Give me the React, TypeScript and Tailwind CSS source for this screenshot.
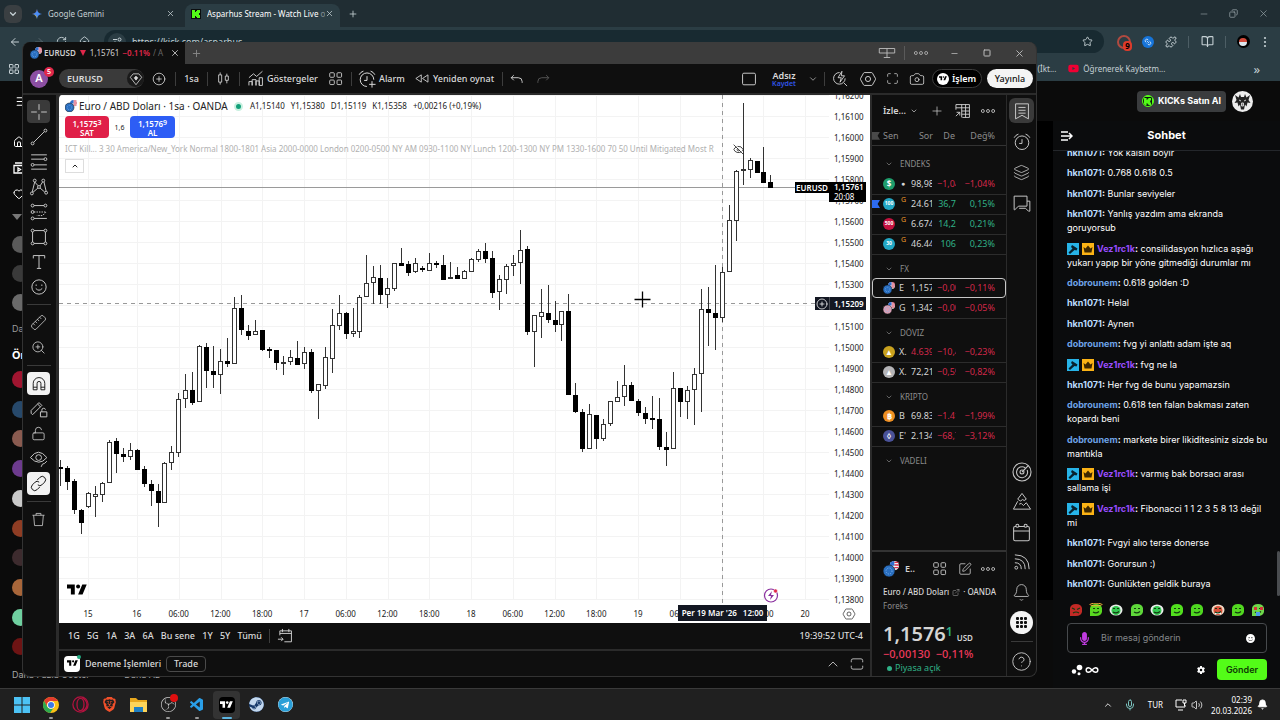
import { ReactNode } from "react";
import {
  ArrowLeft,
  ArrowRight,
  Bell,
  BookOpen,
  Camera,
  ChevronDown,
  ChevronUp,
  CircleHelp,
  CirclePlus,
  Copy,
  ExternalLink,
  EyeOff,
  Home,
  Heart,
  Infinity as InfinityIcon,
  Layers,
  LayoutGrid,
  Link2,
  LockOpen,
  Maximize,
  Menu,
  Mic,
  Minus,
  Plus,
  Puzzle,
  RotateCw,
  Ruler,
  Square,
  SquarePen,
  Star,
  Volume2,
  X,
  ZoomIn,
} from "lucide-react";
import { FaTelegram, FaSteam, FaYoutube } from "react-icons/fa";
import { FaGear, FaMicrophone, FaFaceSmile } from "react-icons/fa6";
import { SiBrave, SiObsstudio } from "react-icons/si";
import { VscVscode } from "react-icons/vsc";

/* ---------------- Data ---------------- */

// [high, bodyTop, bodyBottom, low, down]
const candles: [number, number, number, number, number][] = [
  [460, 467, 469, 486, 1],
  [466, 468, 482, 490, 1],
  [479, 481, 510, 514, 1],
  [509, 510, 523, 534, 1],
  [492, 493, 507, 508, 0],
  [486, 494, 497, 517, 0],
  [482, 483, 495, 502, 0],
  [440, 442, 483, 483, 0],
  [438, 441, 454, 473, 1],
  [448, 454, 457, 462, 1],
  [443, 450, 457, 460, 0],
  [449, 450, 470, 470, 1],
  [466, 469, 484, 487, 1],
  [480, 484, 491, 506, 1],
  [484, 491, 503, 527, 1],
  [462, 463, 503, 503, 0],
  [446, 452, 463, 470, 0],
  [393, 399, 453, 457, 0],
  [374, 390, 399, 408, 0],
  [372, 390, 403, 405, 1],
  [345, 346, 402, 402, 0],
  [343, 347, 371, 388, 1],
  [346, 371, 375, 388, 1],
  [349, 361, 375, 394, 0],
  [338, 361, 364, 367, 1],
  [297, 308, 364, 364, 0],
  [295, 308, 330, 335, 1],
  [325, 331, 336, 340, 1],
  [320, 331, 335, 335, 0],
  [330, 330, 350, 351, 1],
  [347, 349, 351, 358, 1],
  [350, 350, 363, 370, 1],
  [356, 362, 363, 375, 0],
  [350, 357, 362, 365, 0],
  [341, 358, 365, 365, 1],
  [347, 352, 364, 369, 0],
  [349, 352, 391, 393, 1],
  [384, 384, 391, 419, 0],
  [347, 357, 386, 389, 0],
  [309, 325, 359, 373, 0],
  [295, 313, 326, 330, 0],
  [312, 313, 334, 339, 1],
  [308, 331, 334, 337, 0],
  [295, 297, 332, 338, 0],
  [255, 283, 297, 297, 0],
  [266, 277, 283, 304, 0],
  [265, 278, 295, 304, 1],
  [278, 288, 295, 308, 0],
  [263, 263, 289, 291, 0],
  [248, 263, 266, 266, 1],
  [261, 264, 273, 276, 1],
  [258, 263, 272, 273, 0],
  [266, 268, 270, 272, 1],
  [253, 263, 271, 271, 0],
  [261, 263, 265, 268, 1],
  [255, 265, 280, 280, 1],
  [262, 277, 279, 279, 0],
  [267, 275, 279, 279, 1],
  [270, 271, 279, 279, 0],
  [258, 259, 272, 272, 0],
  [249, 251, 260, 262, 0],
  [243, 251, 259, 263, 1],
  [251, 258, 293, 298, 1],
  [275, 279, 292, 310, 0],
  [264, 266, 280, 294, 0],
  [255, 263, 266, 276, 0],
  [230, 250, 263, 284, 0],
  [246, 249, 332, 335, 1],
  [315, 315, 332, 367, 0],
  [289, 312, 317, 338, 0],
  [285, 313, 320, 323, 1],
  [301, 320, 325, 332, 1],
  [311, 311, 325, 341, 0],
  [294, 311, 395, 395, 1],
  [383, 395, 412, 413, 1],
  [409, 412, 449, 452, 1],
  [404, 414, 449, 449, 0],
  [415, 415, 439, 449, 1],
  [419, 424, 439, 441, 0],
  [401, 401, 424, 426, 0],
  [381, 397, 402, 402, 0],
  [365, 385, 397, 406, 0],
  [382, 385, 401, 401, 1],
  [399, 401, 413, 416, 1],
  [407, 413, 419, 424, 1],
  [396, 418, 420, 429, 1],
  [398, 419, 447, 450, 1],
  [432, 447, 450, 466, 1],
  [372, 388, 449, 449, 0],
  [388, 388, 402, 417, 1],
  [386, 390, 402, 419, 0],
  [368, 374, 390, 425, 0],
  [289, 309, 374, 412, 0],
  [287, 309, 313, 346, 1],
  [265, 313, 318, 350, 1],
  [267, 272, 318, 322, 0],
  [205, 220, 272, 272, 0],
  [170, 171, 221, 241, 0],
  [103, 169, 171, 185, 0],
  [158, 160, 170, 178, 0],
  [161, 161, 173, 173, 1],
  [147, 172, 183, 183, 1],
  [175, 182, 188, 188, 1],
];

const prices = Array.from({ length: 25 }, (_, i) => {
  const v = 16200 - i * 100;
  return `1,${v}`;
});

const times = [
  "16", "06:00", "12:00", "18:00", "17", "06:00", "12:00", "18:00", "18",
  "06:00", "12:00", "18:00", "19", "06:00", "", "18:00", "20",
];

type Quote = {
  sym: string;
  color: string;
  mark: string;
  last: string;
  chg: string;
  pct: string;
  up?: boolean;
  lastRed?: boolean;
  delayed?: boolean;
  flag?: boolean;
  pair?: string;
  selected?: boolean;
};

const sections: { title: string; rows: Quote[] }[] = [
  {
    title: "ENDEKS",
    rows: [
      { sym: "●", color: "bg-[#1f9d6c]", mark: "$", last: "98,989", chg: "−1,04", pct: "−1,04%" },
      { sym: "", color: "bg-[#22a7c4]", mark: "100", last: "24.610", chg: "36,7", pct: "0,15%", up: true, delayed: true, flag: true },
      { sym: "", color: "bg-[#c4123f]", mark: "500", last: "6.674", chg: "14,2", pct: "0,21%", up: true, delayed: true },
      { sym: "", color: "bg-[#22a7c4]", mark: "30", last: "46.440", chg: "106", pct: "0,23%", up: true, delayed: true },
    ],
  },
  {
    title: "FX",
    rows: [
      { sym: "E", color: "", mark: "", pair: "#2a6fc0", last: "1,1576", chg: "−0,00", pct: "−0,11%", selected: true },
      { sym: "G", color: "", mark: "", pair: "#d8a0b4", last: "1,3425", chg: "−0,00", pct: "−0,05%" },
    ],
  },
  {
    title: "DÖVIZ",
    rows: [
      { sym: "X.", color: "bg-[#c9a21f]", mark: "▲", last: "4.6395", chg: "−10,4", pct: "−0,23%", lastRed: true },
      { sym: "X.", color: "bg-[#b5b5b8]", mark: "▲", last: "72,215", chg: "−0,59", pct: "−0,82%" },
    ],
  },
  {
    title: "KRIPTO",
    rows: [
      { sym: "B", color: "bg-[#ee8f22]", mark: "฿", last: "69.83", chg: "−1.41", pct: "−1,99%" },
      { sym: "E'", color: "bg-[#4a5299]", mark: "◊", last: "2.134", chg: "−68,7", pct: "−3,12%" },
    ],
  },
  { title: "VADELI", rows: [] },
];

const chat: { user: string; text: string }[] = [
  { user: "hkn1071", text: "Yok kalsin boyir" },
  { user: "hkn1071", text: "0.768 0.618 0.5" },
  { user: "hkn1071", text: "Bunlar seviyeler" },
  { user: "hkn1071", text: "Yanlış yazdım ama ekranda goruyorsub" },
  { user: "Vez1rc1k", text: "consilidasyon hızlıca aşağı yukarı yapıp bir yöne gitmediği durumlar mı" },
  { user: "dobrounem", text: "0.618 golden :D" },
  { user: "hkn1071", text: "Helal" },
  { user: "hkn1071", text: "Aynen" },
  { user: "dobrounem", text: "fvg yi anlattı adam işte aq" },
  { user: "Vez1rc1k", text: "fvg ne la" },
  { user: "hkn1071", text: "Her fvg de bunu yapamazsin" },
  { user: "dobrounem", text: "0.618 ten falan bakması zaten kopardı beni" },
  { user: "dobrounem", text: "markete birer likiditesiniz sizde bu mantıkla" },
  { user: "Vez1rc1k", text: "varmış bak borsacı arası sallama işi" },
  { user: "Vez1rc1k", text: "Fibonacci 1 1 2 3 5 8 13 değil mi" },
  { user: "hkn1071", text: "Fvgyi alıo terse donerse" },
  { user: "hkn1071", text: "Gorursun :)" },
  { user: "hkn1071", text: "Gunlükten geldik buraya" },
];

const userColors: Record<string, string> = {
  hkn1071: "text-[#bcdcff]",
  dobrounem: "text-[#6ea3e8]",
  Vez1rc1k: "text-[#9a4dff]",
};

/* ---------------- Icons ---------------- */

function Draw({ size = 18, children }: { size?: number; children: ReactNode }) {
  return (
    <svg
      width={size}
      height={size}
      viewBox="0 0 28 28"
      fill="none"
      stroke="currentColor"
      strokeWidth="1.4"
      className="shrink-0"
    >
      {children}
    </svg>
  );
}

function TvLogo({ width = 20 }: { width?: number }) {
  return (
    <svg width={width} viewBox="0 0 36 20" fill="currentColor" className="shrink-0">
      <path d="M14 19H7V8H0V1h14v18zM28 19h-8l7.5-18h8L28 19z" />
      <circle cx="20" cy="4.5" r="3.6" />
    </svg>
  );
}

function PairFlag({ size = 12, base = "#2a6fc0" }: { size?: number; base?: string }) {
  return (
    <svg width={size} height={size} viewBox="0 0 24 24" className="shrink-0">
      <circle cx="17" cy="7" r="7" fill="#f3f3f6" />
      <path d="M17 2h6M17 6h7M17 10h6" stroke="#d9304c" strokeWidth="2" />
      <path d="M17 0a7 7 0 0 0-7 7h7z" fill="#2f6fd0" />
      <circle cx="9" cy="15" r="9" fill={base} stroke="#0f0f0f" strokeWidth="1" />
      <circle cx="9" cy="15" r="4.5" fill="none" stroke="#7fb4f0" strokeWidth="1.4" strokeDasharray="1.6 2" />
    </svg>
  );
}

const Dots = () => (
  <Draw size={16}>
    <circle cx="5" cy="14" r="2.6" />
    <circle cx="14" cy="14" r="2.6" />
    <circle cx="23" cy="14" r="2.6" />
  </Draw>
);

const Hexagon = ({ size = 18 }: { size?: number }) => (
  <Draw size={size}>
    <path d="M8.500 4h11q1 0 1.500 1l4.500 8q.5 1 0 2l-4.500 8q-.5 1-1.500 1h-11q-1 0-1.500-1l-4.500-8q-.5-1 0-2L7 5q.5-1 1.500-1z" />
    <circle cx="14" cy="14" r="4" />
  </Draw>
);

const FourSquares = () => (
  <Draw size={17}>
    <rect x="4.500" y="4.500" width="7.500" height="7.500" rx="1.500" />
    <rect x="16.500" y="4.500" width="7.500" height="7.500" rx="1.500" />
    <rect x="4.500" y="16.500" width="7.500" height="7.500" rx="1.500" />
    <rect x="16.500" y="16.500" width="7.500" height="7.500" rx="1.500" />
  </Draw>
);

const AlarmClock = ({ plus }: { plus?: boolean }) => (
  <Draw size={20}>
    <circle cx="14" cy="15" r="9.500" strokeDasharray={plus ? "0 15 46" : undefined} />
    <path d="M14 10v6h-4M3 8q2-4 6-5M25 8q-2-4-6-5" />
    {plus && <path d="M21 17v9M17 21.500h9" />}
  </Draw>
);

function KickMark({ size = 10 }: { size?: number }) {
  return (
    <svg width={size} height={size} viewBox="0 0 10 10" className="shrink-0">
      <rect width="10" height="10" fill="#0b0e0f" />
      <path d="M1 1h3v2h1V2h1V1h3v3H8v2h1v3H6V8H5V7H4v2H1z" fill="#53fc18" />
    </svg>
  );
}

/* ---------------- Browser ---------------- */

function BrowserChrome() {
  return (
    <header className="shrink-0 bg-[#202d33] text-[#c5d0d4] font-['Noto_Sans',sans-serif]">
      <div className="flex h-[27px] items-center">
        <button aria-label="Sekmeler" className="ml-1 flex h-[18px] w-[18px] items-center justify-center rounded-md bg-[#3a3f42]">
          <ChevronDown size={10} strokeWidth={3} />
        </button>
        <div className="flex w-[163px] items-center px-2.5">
          <svg width="10" height="10" viewBox="0 0 10 10">
            <path d="M5 0Q5.500 4.500 10 5 5.500 5.500 5 10 4.500 5.500 0 5 4.500 4.500 5 0z" fill="#4c8df5" />
            <path d="M5 0Q5.200 3 3 3.800L0 5q4-.5 5-5z" fill="#f0624d" />
            <path d="M0 5q4 .5 5 5 0-3-1.500-4z" fill="#e8c33b" />
          </svg>
          <span className="ml-1.5 flex-1 text-[8px]">Google Gemini</span>
          <button aria-label="Sekmeyi kapat"><X size={9} /></button>
        </div>
        <div className="mt-1 flex h-[23px] w-[155px] items-center rounded-t-lg bg-[#2b3d44] pb-1 pl-1.5 pr-1.5">
          <KickMark />
          <span className="ml-1.5 flex-1 overflow-hidden whitespace-nowrap text-[8px] text-white">
            Asparhus Stream - Watch Live <span className="opacity-40">o</span>
          </span>
          <button aria-label="Sekmeyi kapat"><X size={9} /></button>
        </div>
        <button aria-label="Yeni sekme" className="ml-2"><Plus size={10} /></button>
        <div className="ml-auto flex gap-5 pr-[11px] text-[#98a4a9]">
          <button aria-label="Küçült"><Minus size={10} strokeWidth={1.5} /></button>
          <button aria-label="Geri yükle"><Copy size={9} className="-scale-x-100" /></button>
          <button aria-label="Kapat"><X size={11} strokeWidth={1.5} /></button>
        </div>
      </div>
      <div className="flex h-[29px] items-center bg-[#2b3d44] pl-[9px] pr-[11px]">
        <nav className="flex w-[95px] items-center justify-between pr-[14px]">
          <button aria-label="Geri"><ArrowLeft size={12} /></button>
          <button aria-label="İleri" className="text-[#56666c]"><ArrowRight size={12} /></button>
          <button aria-label="Yenile"><RotateCw size={11} /></button>
          <button aria-label="Ana sayfa"><Home size={11} /></button>
        </nav>
        <div className="flex h-[23px] flex-1 items-center rounded-full bg-[#182a31] pl-1 pr-[11px]">
          <span className="flex h-[18px] w-[18px] items-center justify-center rounded-full bg-[#2b3d44]">
            <svg width="9" height="9" viewBox="0 0 9 9" fill="none" stroke="currentColor">
              <path d="M0 2.500h4M5 6.500h4" />
              <circle cx="6.500" cy="2.500" r="1.500" />
              <circle cx="2" cy="6.500" r="1.500" />
            </svg>
          </span>
          <input aria-label="Adres" readOnly value="https://kick.com/asparhus" className="ml-1.5 min-w-0 flex-1 bg-transparent text-[9px] outline-none" />
          <Star size={11} />
        </div>
        <div className="flex w-[165px] items-center justify-between pl-[13px]">
          <span className="relative h-3.5 w-3.5 rounded-full border-2 border-[#b04a40]">
            <b className="absolute left-1 top-1 h-[10px] w-[9px] rounded-sm bg-[#dd3b2b] text-center text-[8px] leading-[10px] text-black">9</b>
          </span>
          <span className="flex h-3 w-3 items-center justify-center rounded-full bg-[#1674d9] text-white"><Link2 size={8} className="rotate-45" /></span>
          <Puzzle size={12} />
          <i className="h-3 w-px bg-[#4d5e65]" />
          <BookOpen size={13} />
          <i className="h-3 w-px bg-[#4d5e65]" />
          <span className="flex h-[13px] w-[13px] items-center justify-center rounded-full bg-black">
            <span className="h-2 w-2 rounded-full bg-[linear-gradient(#d44b3c_50%,#dce7ee_50%)]" />
          </span>
          <svg width="8" height="12" viewBox="0 0 8 12" fill="currentColor">
            <circle cx="4" cy="2" r="1.100" />
            <circle cx="4" cy="6" r="1.100" />
            <circle cx="4" cy="10" r="1.100" />
          </svg>
        </div>
      </div>
      <nav className="flex h-[25px] items-center bg-[#2b3d44] pl-2 pr-5 text-[8px]">
        <LayoutGrid size={12} />
        <a href="#ikt" className="ml-auto">(İkt...</a>
        <a href="#yt" className="ml-3 flex items-center gap-1">
          <FaYoutube size={11} className="text-[#f00033]" />
          Öğrenerek Kaybetm...
        </a>
        <span className="ml-[88px] text-[13px] leading-3">»</span>
      </nav>
    </header>
  );
}

const avatars = [
  "bg-[#5a5a5a]", "bg-[#3a3a3a]", "bg-[#6a6a6a]",
];
const channels = [
  "bg-[#a01530]", "bg-[#27496b]", "bg-[#8a5b50]", "bg-[#6d3b8e]", "bg-[#c9c9c9]",
  "bg-[#8f3d24]", "bg-[#3d2b2e]", "bg-[#a8663a]", "bg-[#6fd0a0]", "bg-[#6e1414]",
];

function KickSidebar() {
  return (
    <aside className="flex w-[200px] shrink-0 flex-col pl-3 pt-3.5 text-[9px] text-white font-['Inter',sans-serif]">
      <Menu size={13} className="ml-[3px]" />
      <div className="flex flex-col gap-3.5 pl-px pt-7">
        <Home size={12} />
        <svg width="12" height="12" viewBox="0 0 12 12" fill="none" stroke="currentColor" strokeWidth="1.300">
          <path d="M2 1h9M1 3.500h10.500V11H1zM5 6v3l2.500-1.500z" />
        </svg>
        <Heart size={12} />
      </div>
      <div className="flex h-7 items-end pb-2">
        <svg width="10" height="6" viewBox="0 0 10 6" fill="#777"><path d="M0 0h10L5 6z" /></svg>
      </div>
      <div className="flex flex-col gap-3 pt-2">
        {avatars.map((c) => (
          <span key={c} className={`h-[17px] w-[17px] rounded-full ${c}`} />
        ))}
      </div>
      <p className="pt-2.5 leading-4 text-[#9a9a9a]">Daha Fazla</p>
      <p className="pt-2.5 text-[11px] font-bold leading-4">Önerilen</p>
      <div className="flex flex-1 flex-col justify-between pt-2">
        {channels.map((c) => (
          <span key={c} className={`h-[17px] w-[17px] rounded-full ${c}`} />
        ))}
      </div>
      <p className="flex justify-between pb-[7px] pr-10 pt-3 text-[#a5a5a5]">
        <a href="#more">Daha Fazla Göster</a>
        <a href="#less">Daha Az</a>
      </p>
    </aside>
  );
}

/* ---------------- Chat ---------------- */

function Badges() {
  return (
    <span className="mr-[3px] inline-flex gap-[3px] align-[-3px]">
      <svg width="12" height="12" viewBox="0 0 12 12">
        <rect width="12" height="12" fill="#27b4e8" />
        <path d="M5 2l5.500 3.500-1 2L7.500 7 3 11l-1.500-1.500 4-4L4 4z" fill="#08222e" />
      </svg>
      <svg width="12" height="12" viewBox="0 0 12 12">
        <rect width="12" height="12" fill="#fbb315" />
        <path d="M1.500 4l2 1.500L6 2.500l2.500 3 2-1.500-1 5.500h-7z" fill="#3d2800" />
      </svg>
    </span>
  );
}

const emotes = [
  "#c22a26", "#58d820", "#e8ece8", "#5fd83a", "#eceeec", "#52e01e", "#4fd820", "#f0d9c4", "#52d820", "#6fd84a",
];

function Emote({ color, index }: { color: string; index: number }) {
  const white = index === 2 || index === 4 || index === 7;
  return (
    <svg width="14" height="14" viewBox="0 0 14 14">
      {white ? (
        <ellipse cx="7" cy="7" rx="6.500" ry="5.500" fill={color} />
      ) : (
        <path d="M1 13V5q1-4 6-4t6 4v4q-1 4-6 4z" fill={color} />
      )}
      {white && <circle cx="7" cy="7.500" r="4.500" fill={index === 7 ? "#d9503a" : "#33c850"} />}
      {index === 7 && <path d="M4 9h6v2H4z" fill="#fff" />}
      {index === 1 && <ellipse cx="7" cy="1.500" rx="6" ry="1.300" fill="none" stroke="#f1b53a" />}
      <path d={index === 0 ? "M3 5l3 1.500M11 5L8 6.500M4 10q3-2 6 0" : "M4 5.500h2M8 5.500h2M4 9q3 2 6-.5"} fill="none" stroke="#123a10" strokeWidth="1.200" />
      {index === 9 && <path d="M3 4h3v3H3zM9 4h3v3H9z" fill="#d5343c" />}
      {index === 9 && <path d="M5 9h4v4H5z" fill="#4d9be8" />}
    </svg>
  );
}

function Chat() {
  return (
    <aside className="flex w-[227px] shrink-0 flex-col bg-[#0b0c0d] font-['Inter',sans-serif] text-white">
      <div className="flex h-[30px] shrink-0 items-center border-b border-[#24272b] px-2">
        <button aria-label="Sohbeti gizle" className="w-3">
          <svg width="12" height="10" viewBox="0 0 12 10" stroke="white" strokeWidth="1.500" fill="none">
            <path d="M0 1h7M0 5h11M0 9h7M8 2l3 3-3 3" />
          </svg>
        </button>
        <h2 className="flex-1 pr-3 text-center text-[11px] font-bold">Sohbet</h2>
      </div>
      <div className="relative min-h-0 flex-1 overflow-hidden pl-3.5 pr-3">
        <ul className="-mt-[5px] flex h-full flex-col justify-between text-[9px] leading-[14px]">
          {chat.map((m, i) => (
            <li key={i}>
              {m.user === "Vez1rc1k" && <Badges />}
              <b className={userColors[m.user]}>{m.user}</b>
              <b>:</b> {m.text}
            </li>
          ))}
        </ul>
        <span className="absolute bottom-0 right-0 h-[45px] w-[3px] rounded bg-[#4a4d50]" />
      </div>
      <div className="px-3.5 pr-[13px]">
        <div className="flex h-[25px] items-center justify-between px-[2px] pt-0.5">
          {emotes.map((c, i) => (
            <Emote key={i} color={c} index={i} />
          ))}
        </div>
        <div className="mt-[2px] flex h-[30px] items-center rounded-sm border border-[#474a4d] px-2.5">
          <FaMicrophone size={13} className="text-[#c03be0]" />
          <input aria-label="Mesaj" placeholder="Bir mesaj gönderin" className="ml-2.5 min-w-0 flex-1 bg-transparent text-[9px] outline-none placeholder:text-[#85888b]" />
          <FaFaceSmile size={9} className="mr-px" />
        </div>
        <div className="mb-2 mt-1.5 flex h-[21px] items-center pl-1">
          <svg width="12" height="12" viewBox="0 0 12 12" fill="white">
            <circle cx="8.500" cy="3.500" r="2.800" />
            <circle cx="3" cy="7.500" r="2.200" />
            <circle cx="8" cy="9.800" r="1.500" />
          </svg>
          <InfinityIcon size={14} strokeWidth={2.5} className="ml-0.5" />
          <button aria-label="Ayarlar" className="ml-auto mr-3"><FaGear size={8} /></button>
          <button className="h-[21px] w-[50px] rounded-sm bg-[#53fc18] text-[9px] font-semibold text-[#0f3a05]">Gönder</button>
        </div>
      </div>
    </aside>
  );
}

/* ---------------- Trading window ---------------- */

const Sep = ({ className = "" }: { className?: string }) => (
  <i className={`h-3.5 w-px shrink-0 bg-[#3d3d3d] ${className}`} />
);

function WindowTabs() {
  return (
    <div className="flex h-[22px] shrink-0 items-center bg-[#3c3c3c] text-[#cfcfcf]">
      <div className="flex h-full w-[162px] items-center bg-[#0f0f0f] pl-[7px] pr-[5px] text-[8px]">
        <PairFlag size={12} />
        <span className="ml-[2px] text-[8px] font-semibold">EURUSD</span>
        <svg width="6" height="6" viewBox="0 0 6 6" className="ml-1"><path d="M0 0h6L3 6z" fill="#e0274a" /></svg>
        <span className="ml-1">1,15761</span>
        <span className="ml-[3px] font-semibold text-[#e0274a]">−0.11%</span>
        <span className="ml-[3px] flex-1 overflow-hidden whitespace-nowrap text-[#666]">/ A</span>
        <button aria-label="Sekmeyi kapat"><X size={10} /></button>
      </div>
      <button aria-label="Yeni sekme" className="ml-1.5 text-[#888]"><Plus size={11} /></button>
      <div className="ml-auto flex items-center text-[#bdbdbd]">
        <Draw size={18}>
          <path d="M2 7h24v7H2zM14 7v14M9 21h10" />
        </Draw>
        <Sep className="ml-2 bg-[#5a5a5a]" />
        <span className="ml-2"><Dots /></span>
        <button aria-label="Küçült" className="ml-[15px] w-[33px] pl-1.5"><Minus size={9} /></button>
        <button aria-label="Büyüt" className="w-[33px] pl-1.5"><Square size={8} strokeWidth={3} /></button>
        <button aria-label="Kapat" className="w-[26px] pl-1"><X size={11} /></button>
      </div>
    </div>
  );
}

function Toolbar() {
  return (
    <div className="flex h-[29px] shrink-0 items-center bg-[#0f0f0f] pl-[7px] pr-[3px] text-[9px] font-medium text-[#dadada]">
      <div className="relative flex h-[18px] w-[18px] items-center justify-center rounded-full bg-[#8c4fa3] text-[11px] font-semibold text-white">
        A
        <span className="absolute -right-1.5 -top-[3px] h-2.5 w-2.5 rounded-full bg-[#e0274a] text-center text-[7px] leading-[10px]">5</span>
      </div>
      <button className="ml-[11px] flex h-[19px] w-[85px] items-center justify-between rounded-full bg-[#3a3a3a] pl-2 font-semibold">
        EURUSD
        <span className="flex h-[17px] w-[17px] items-center justify-center rounded-full bg-[#1a1a1a]">
          <Draw size={16}>
            <path d="M9 5h10l5 6-10 13L4 11z" />
            <path d="M14 9l3 3-3 4-3-4z" fill="currentColor" />
          </Draw>
        </span>
      </button>
      <button aria-label="Ekle" className="ml-2"><CirclePlus size={14} strokeWidth={1.4} /></button>
      <Sep className="ml-[9px]" />
      <button className="w-[31px] text-center">1sa</button>
      <Sep />
      <button aria-label="Mum" className="flex w-[31px] justify-center">
        <Draw size={17}>
          <path d="M6 8h5v12H6zM8.500 4v4M8.500 20v4M17 10h5v7h-5zM19.500 6v4M19.500 17v5" />
        </Draw>
      </button>
      <Sep />
      <button className="ml-[7px] flex w-[71px] items-center gap-0.5 whitespace-nowrap">
        <Draw size={18}>
          <path d="M3 24v-6h5v6M8 24v-9h6v9M14 24v-7h5v7M19 24V12h5v12zM3 12l7-6 5 4 9-8" />
        </Draw>
        Göstergeler
      </button>
      <button aria-label="Şablonlar" className="ml-[9px]"><FourSquares /></button>
      <Sep className="ml-[7px]" />
      <button className="ml-[5px] flex w-[53px] items-center gap-0.5">
        <AlarmClock plus />
        Alarm
      </button>
      <button className="ml-1 flex w-[84px] items-center gap-0.5 whitespace-nowrap">
        <Draw size={17}>
          <path d="M12 8v12l-9-6zM23 8v12l-9-6z" />
        </Draw>
        Yeniden oynat
      </button>
      <Sep className="ml-1" />
      <button aria-label="Geri al" className="ml-[5px]">
        <Draw><path d="M9 8l-4 4 4 4M5 12h11q6 0 6 6v2" /></Draw>
      </button>
      <button aria-label="Yinele" className="ml-2 text-[#5a5a5a]">
        <Draw><path d="M19 8l4 4-4 4M23 12H12q-6 0-6 6v2" /></Draw>
      </button>
      <button aria-label="Düzen" className="ml-auto">
        <Draw size={18}><rect x="4" y="5" width="20" height="18" rx="2" /></Draw>
      </button>
      <button className="ml-1.5 w-[40px] text-center font-semibold leading-[9px]">
        Adsız
        <span className="block text-[7px] leading-[7px] text-[#2f55e8]">Kaydet</span>
      </button>
      <ChevronDown size={10} className="ml-1" strokeWidth={1.5} />
      <Sep className="ml-1.5" />
      <div className="ml-1.5 flex w-[94px] items-center justify-between">
        <Draw>
          <circle cx="13" cy="13" r="9" strokeDasharray="42 14" />
          <path d="M20 20l5 5M17 2l-6 10h5l-2 7 7-10h-5z" />
        </Draw>
        <Hexagon />
        <Maximize size={13} strokeWidth={1.3} />
        <Camera size={16} strokeWidth={1.2} />
      </div>
      <button className="ml-[7px] flex h-[19px] w-[50px] items-center gap-[3px] rounded-full border border-[#3d3d3d] bg-black pl-1 font-semibold text-white">
        <span className="flex h-3 w-3 items-center justify-center rounded-full bg-white text-black"><TvLogo width={8} /></span>
        İşlem
      </button>
      <button className="ml-[5px] h-[19px] w-[46px] rounded-full bg-[#f4f4f4] text-[#0f0f0f]">Yayınla</button>
    </div>
  );
}

const Tool = ({ label, on, children }: { label: string; on?: "dark" | "light"; children: ReactNode }) => (
  <button
    aria-label={label}
    className={`my-px flex h-[23px] w-[23px] items-center justify-center rounded ${
      on === "dark" ? "bg-[#3a3a3a]" : on === "light" ? "bg-[#f2f2f2] text-[#0f0f0f]" : ""
    }`}
  >
    {children}
  </button>
);

const ToolSep = () => <i className="my-[5px] h-px w-6 bg-[#3a3a3a]" />;

function DrawingTools() {
  return (
    <nav className="flex w-[33px] shrink-0 flex-col items-center bg-[#0f0f0f] pr-0.5 pt-[4px] text-[#c4c4c4]">
      <Tool label="Artı imleç" on="dark">
        <Draw size={20}><path d="M14 3v8M14 17v8M3 14h8M17 14h8" /></Draw>
      </Tool>
      <Tool label="Trend çizgisi">
        <Draw size={20}><circle cx="5" cy="23" r="2" /><circle cx="23" cy="5" r="2" /><path d="M6.500 21.500l15-15" /></Draw>
      </Tool>
      <Tool label="Fib düzeltmesi">
        <Draw size={20}><path d="M3 4h22M3 10h18M7 18h18M3 24h22" /><circle cx="23" cy="10" r="2" /><circle cx="5" cy="18" r="2" /></Draw>
      </Tool>
      <Tool label="Desenler">
        <Draw size={20}><circle cx="4" cy="23" r="2" /><circle cx="8" cy="5" r="2" /><circle cx="20" cy="5" r="2" /><circle cx="24" cy="22" r="2" /><circle cx="14" cy="14" r="2" /><path d="M4.500 21L8 7l5 5.500M15.500 12.500L19 7M21 7l3 13M15.500 15.500L22 21M12.500 15.500L5.500 21.500" /></Draw>
      </Tool>
      <Tool label="Tahmin">
        <Draw size={20}><circle cx="5" cy="5" r="2" /><circle cx="23" cy="5" r="2" /><circle cx="5" cy="14" r="2" /><circle cx="5" cy="23" r="2" /><path d="M7 5h14M7 23h18" /><path d="M7 14h17l-5 5h-8" strokeDasharray="2 1.500" /></Draw>
      </Tool>
      <Tool label="Şekiller">
        <Draw size={20}><circle cx="5" cy="5" r="2" /><circle cx="23" cy="5" r="2" /><circle cx="5" cy="23" r="2" /><circle cx="23" cy="23" r="2" /><path d="M7 5h14M7 23h14M5 7v14M23 7v14" /></Draw>
      </Tool>
      <Tool label="Metin">
        <Draw size={20}><path d="M6 9V5h16v4M14 5v18M11 23h6" /></Draw>
      </Tool>
      <Tool label="İkonlar">
        <Draw size={20}><circle cx="14" cy="14" r="10" /><path d="M10 10.500v2M18 10.500v2M9.500 16q4.500 5 9 0" /></Draw>
      </Tool>
      <ToolSep />
      <Tool label="Ölç"><Ruler size={17} strokeWidth={1.2} className="-scale-x-100" /></Tool>
      <Tool label="Yakınlaştır"><ZoomIn size={15} strokeWidth={1.4} /></Tool>
      <ToolSep />
      <Tool label="Mıknatıs" on="light">
        <Draw size={18}><path d="M5 23V13a9 9 0 0 1 18 0v10h-6V13a3 3 0 0 0-6 0v10zM5 19h6M17 19h6" /></Draw>
      </Tool>
      <Tool label="Çizimde kal">
        <Draw size={20}><path d="M3 20l2 2 13-13-4-4L3 16zM12 7l4 4M16 18h9v7h-9zM18 18v-2a2.500 2.500 0 0 1 5-1" /></Draw>
      </Tool>
      <Tool label="Kilitle"><LockOpen size={15} strokeWidth={1.4} /></Tool>
      <Tool label="Gizle">
        <Draw size={20}><path d="M2 12q11-15 23 0-11 13-23 0zM17 25q1-5 5-5l3-3" /><circle cx="13.500" cy="12" r="4" /></Draw>
      </Tool>
      <Tool label="Bağla" on="light">
        <Draw size={19}><path d="M12 9l4-4a4.500 4.500 0 0 1 7 7l-4 4a4.500 4.500 0 0 1-6 0M16 19l-4 4a4.500 4.500 0 0 1-7-7l4-4a4.500 4.500 0 0 1 6 0" /></Draw>
      </Tool>
      <ToolSep />
      <Tool label="Sil">
        <Draw size={17}><path d="M4 7h20M10 7V4h8v3M6 7l1.500 17h13L22 7" /></Draw>
      </Tool>
    </nav>
  );
}

function CandleChart() {
  const gridX = [88, ...Array.from({ length: 17 }, (_, i) => 137 + Math.round(i * 41.76))];
  return (
    <svg viewBox="59 95 775 509" preserveAspectRatio="xMinYMin meet" className="block w-full">
      <g stroke="#f3f3f3">
        {gridX.map((x) => (
          <path key={x} d={`M${x + 0.5} 95V600`} />
        ))}
        {prices.map((p, i) => (
          <path key={p} d={`M59 ${95.5 + i * 21}H829`} />
        ))}
      </g>
      <path d="M59 187.500H834" stroke="#9a9a9a" />
      <path d="M59 303.500H834M722.500 95V604" stroke="#999" strokeDasharray="4 4" />
      {candles.map(([high, top, bottom, low, down], i) => {
        const x = Math.round(60 + i * 6.965) + 0.5;
        return (
          <g key={i} stroke="#333">
            <path d={`M${x} ${high}V${top}M${x} ${bottom}V${low}`} />
            <rect
              x={x - 2}
              y={top + 0.5}
              width="4"
              height={Math.max(bottom - top - 1, 1)}
              fill={down ? "#000" : "#fff"}
              stroke={down ? "#000" : "#333"}
            />
          </g>
        );
      })}
      <path d="M634.500 299.500h16M642.500 291.500v16" stroke="#000" strokeWidth="1.300" />
      <circle cx="771" cy="595.500" r="6.500" fill="#fff" stroke="#8a2f9e" strokeWidth="1.200" />
      <path d="M772 591l-4 5h3l-1 4 4-5h-3z" fill="#8a2f9e" />
      <circle cx="775.500" cy="591" r="2" fill="#e0274a" stroke="#fff" strokeWidth=".5" />
    </svg>
  );
}

function ChartLegend() {
  return (
    <div className="absolute left-1.5 right-[90px] top-[3px] text-[#222]">
      <div className="flex h-4 items-center whitespace-nowrap">
        <PairFlag size={12} />
        <h1 className="ml-[2px] w-[149px] text-[10px]">Euro / ABD Doları · 1sa · OANDA</h1>
        <span className="ml-[6px] h-[9px] w-[9px] rounded-full border-2 border-[#c9f0e0] bg-[#12a079]" />
        <span className="ml-[7px] flex gap-1.5 text-[8px]">
          <span>A1,15140</span><span>Y1,15380</span><span>D1,15119</span><span>K1,15358</span><span>+0,00216 (+0,19%)</span>
        </span>
      </div>
      <div className="mt-[2px] flex items-center text-center text-[8px] font-semibold leading-[9px] text-white">
        <button className="h-[22px] w-[44px] rounded bg-[#e01f48]">1,1575<span className="align-[2px] text-[7px]">3</span><span className="block">SAT</span></button>
        <span className="w-[21px] text-[7px] font-normal text-[#222]">1,6</span>
        <button className="h-[22px] w-[45px] rounded bg-[#2d5df5]">1,1576<span className="align-[2px] text-[7px]">9</span><span className="block">AL</span></button>
      </div>
      <div className="mt-[3px] flex h-4 items-center justify-between">
        <p className="w-[665px] whitespace-nowrap text-[8px] leading-4 text-[#b0b0b0]">
          ICT Kill... 3 30 America/New_York Normal 1800-1801 Asia 2000-0000 London 0200-0500 NY AM 0930-1100 NY Lunch 1200-1300 NY PM 1330-1600 70 50 Until Mitigated Most R
        </p>
        <EyeOff size={11} strokeWidth={1.8} className="mr-[36px] shrink-0" />
      </div>
      <button aria-label="Göstergeleri gizle" className="mt-[2px] flex h-[14px] w-[19px] items-center justify-center border border-[#ddd] bg-white">
        <ChevronUp size={8} strokeWidth={3} />
      </button>
    </div>
  );
}

function Chart() {
  return (
    <section className="relative flex min-h-0 flex-1 flex-col overflow-hidden rounded-tl-sm bg-white">
      <div className="flex min-h-0 flex-1 overflow-hidden">
        <div className="min-w-0 flex-1">
          <CandleChart />
        </div>
        <div className="-mt-[10px] w-9 shrink-0 text-[8px] leading-[21px] text-[#222]">
          {prices.map((p) => (
            <div key={p} className="h-[21px]">{p}</div>
          ))}
        </div>
      </div>
      <div className="flex h-[19px] shrink-0 items-center bg-white pl-px text-center text-[8px] text-[#222]">
        <span className="w-14">15</span>
        <div className="flex w-[710px]">
          {times.map((t, i) => (
            <span key={i} className="flex-1">{t}</span>
          ))}
        </div>
        <button aria-label="Eksen ayarları" className="ml-4"><Hexagon size={14} /></button>
      </div>

      <ChartLegend />
      <div className="absolute bottom-7 left-2 text-black"><TvLogo width={20} /></div>
      <div className="absolute right-[41px] top-[87px] h-[11px] w-[34px] bg-black text-center text-[8px] font-semibold leading-[11px] text-white">EURUSD</div>
      <div className="absolute right-[4px] top-[87px] h-5 w-[37px] bg-black pl-[5px] text-[8px] font-semibold leading-[10px] text-white">
        1,15761
        <span className="block font-normal">20:08</span>
      </div>
      <div className="absolute right-[4px] top-[202px] flex h-[13px] w-[51px] items-center bg-[#131722] text-[8px] font-semibold text-white">
        <CirclePlus size={12} strokeWidth={1.5} className="ml-px" />
        <i className="mx-px h-full w-px bg-[#4a4d55]" />
        <span className="ml-[3px]">1,15209</span>
      </div>
      <div className="absolute bottom-[2px] left-[619px] flex h-4 w-[89px] items-center justify-center gap-1.5 whitespace-nowrap bg-[#131722] text-[8px] font-semibold text-white">
        <span>Per 19 Mar '26</span>
        <span>12:00</span>
      </div>
    </section>
  );
}

const ranges = ["1G", "5G", "1A", "3A", "6A", "Bu sene", "1Y", "5Y", "Tümü"];

function BottomBars() {
  return (
    <>
      <div className="flex h-[26px] shrink-0 items-center bg-[#0f0f0f] px-[9px] text-[9px] font-medium text-[#dadada]">
        <div className="flex w-[194px] justify-between">
          {ranges.map((r) => (
            <button key={r} className="whitespace-nowrap">{r}</button>
          ))}
        </div>
        <Sep className="ml-[7px]" />
        <button aria-label="Tarihe git" className="ml-1.5">
          <Draw><path d="M6 13V6h18v17H13M6 10h18M10 3v5M20 3v5M3 19h8M8 16l3 3-3 3" /></Draw>
        </button>
        <span className="-mr-0.5 ml-auto">19:39:52 UTC-4</span>
      </div>
      <div className="h-0.5 shrink-0 bg-[#2b2b2b]" />
      <div className="flex h-[25px] shrink-0 items-center bg-[#0f0f0f] px-[5px] text-[9px] font-medium text-[#dadada]">
        <span className="relative flex h-4 w-4 items-center justify-center rounded bg-white text-black">
          <TvLogo width={11} />
          <i className="absolute -right-px -top-px h-1 w-1 rounded-full bg-[#22ab81]" />
        </span>
        <span className="ml-[5px] w-[74px] whitespace-nowrap">Deneme İşlemleri</span>
        <button className="ml-[7px] h-4 w-10 rounded border border-[#4a4a4a]">Trade</button>
        <ChevronUp size={16} strokeWidth={1.2} className="ml-auto" />
        <button aria-label="Tam ekran" className="ml-2">
          <Draw size={16}><path d="M4 11V8q0-3 3-3h14q3 0 3 3v3M4 17v3q0 3 3 3h14q3 0 3-3v-3" /></Draw>
        </button>
      </div>
    </>
  );
}

function Watchlist() {
  return (
    <aside className="relative flex w-[134px] shrink-0 flex-col bg-[#0f0f0f] text-[9px] text-[#d5d5d5]">
      <div className="flex h-8 shrink-0 items-center pl-[11px] pr-2.5">
        <b className="text-[9px] font-semibold">İzle...</b>
        <ChevronDown size={8} className="ml-auto" />
        <button aria-label="Sembol ekle" className="ml-3"><Plus size={14} strokeWidth={1.2} /></button>
        <button aria-label="Tablo" className="ml-2.5">
          <Draw size={18}><path d="M3 12V4h21v20H13M3 9h21M12 4v20M18 4v20M12 14h12M12 19h12M3 22l6-6M4 16h5v5" /></Draw>
        </button>
        <span className="ml-2"><Dots /></span>
      </div>
      <table className="w-full table-fixed border-collapse">
        <colgroup>
          <col className="w-[39px]" />
          <col className="w-[22px]" />
          <col className="w-[26px]" />
          <col />
        </colgroup>
        <thead>
          <tr className="h-[18px] border-b border-[#333] text-[#8c8c8c]">
            <th className="p-0 text-left font-normal">
              <span className="flex items-center">
                <i className="mr-[3px] h-2 w-2 bg-[#4a4a4a] [clip-path:polygon(0_0,100%_0,70%_50%,100%_100%,0_100%)]" />
                Sen
              </span>
            </th>
            <th className="p-0 text-right font-normal">Sor</th>
            <th className="p-0 pr-1 text-right font-normal">De</th>
            <th className="p-0 pr-[11px] text-right font-normal">Değ%</th>
          </tr>
        </thead>
        {sections.map((s, si) => (
          <tbody key={s.title}>
            <tr className={si === 0 ? "h-[29px]" : "h-6"}>
              <td colSpan={4} className={`p-0 pl-[13px] align-middle text-[8px] text-[#8c8c8c] ${si === 0 ? "pt-2" : "pt-[5px]"}`}>
                <span className="flex items-center gap-[7px]"><ChevronDown size={8} />{s.title}</span>
              </td>
            </tr>
            {s.rows.map((r, i) => (
              <tr key={i} className={`h-5 ${r.selected ? "rounded outline -outline-offset-1 outline-[#c8c8c8]" : "border-b border-[#2c2c2c]"}`}>
                <td className="p-0">
                  <span className="flex items-center">
                    <i className={`mr-[3px] h-2 w-2 [clip-path:polygon(0_0,100%_0,70%_50%,100%_100%,0_100%)] ${r.flag ? "bg-[#2d6bf0]" : ""}`} />
                    {r.pair ? (
                      <PairFlag size={12} base={r.pair} />
                    ) : (
                      <span className={`flex h-3 w-3 shrink-0 items-center justify-center rounded-full font-bold text-white ${r.color} ${r.mark.length > 1 ? "text-[5px]" : "text-[8px]"}`}>{r.mark}</span>
                    )}
                    <span className={`ml-1 ${r.delayed ? "pb-2 pl-[2px] text-[7px] leading-[8px] text-[#f09a2a]" : r.sym === "●" ? "pl-[2px] text-[7px]" : ""}`}>{r.delayed ? "G" : r.sym}</span>
                  </span>
                </td>
                <td className={`p-0 ${r.lastRed ? "text-[#d3284a]" : ""}`}><span className="block w-[21px] overflow-hidden whitespace-nowrap">{r.last}</span></td>
                <td className={`p-0 ${r.up ? "text-[#2fb187]" : "text-[#d3284a]"}`}><span className={`ml-1 block w-[19px] overflow-hidden whitespace-nowrap ${r.up ? "text-right" : ""}`}>{r.chg}</span></td>
                <td className={`p-0 pr-[11px] text-right ${r.up ? "text-[#2fb187]" : "text-[#d3284a]"}`}>{r.pct}</td>
              </tr>
            ))}
          </tbody>
        ))}
      </table>

      <div className="mt-auto h-[126px] shrink-0 border-t-2 border-[#333] pl-[11px] pr-2.5">
        <div className="flex h-[33px] items-center">
          <PairFlag size={16} />
          <b className="ml-1.5 text-[9px] font-semibold">E..</b>
          <span className="ml-auto"><FourSquares /></span>
          <button aria-label="Not" className="ml-2.5"><SquarePen size={14} strokeWidth={1.3} /></button>
          <span className="ml-2"><Dots /></span>
        </div>
        <p className="flex h-[14px] items-center whitespace-nowrap text-[8px] font-medium">
          Euro / ABD Doları <ExternalLink size={9} className="mx-[3px] text-[#888]" /> · OANDA
        </p>
        <p className="text-[8px] leading-[14px] text-[#8c8c8c]">Foreks</p>
        <p className="mt-[9px] flex h-6 items-center whitespace-nowrap text-[20px] font-semibold leading-6">
          1,1576<span className="self-start text-[12px] leading-5 text-[#2fb187]">1</span>
          <span className="ml-1 self-end text-[8px] leading-4">USD</span>
        </p>
        <p className="whitespace-nowrap text-[11px] font-medium leading-[15px] text-[#ee3a5c]">−0,00130&nbsp; −0,11%</p>
        <p className="flex items-center gap-[3px] pl-1 text-[9px] leading-[14px] text-[#2fb187]">
          <i className="h-[5px] w-[5px] rounded-full bg-[#2fb187]" />
          Piyasa açık
        </p>
      </div>
    </aside>
  );
}

const RailButton = ({ label, tall, children }: { label: string; tall?: boolean; children: ReactNode }) => (
  <button aria-label={label} className={`flex w-full items-center justify-center ${tall ? "h-[31px]" : "h-[30px]"}`}>{children}</button>
);

function Rail() {
  return (
    <nav className="flex w-[30px] shrink-0 flex-col items-center border-l border-[#2b2b2b] bg-[#0f0f0f] text-[#c4c4c4]">
      <RailButton label="İzleme listesi" tall>
        <span className="flex h-[25px] w-[25px] items-center justify-center rounded-md bg-[#3a3a3a]">
          <Draw size={20}><path d="M5 4h18v21l-9-5-9 5zM9 9h10M9 13h10M9 17h10" /></Draw>
        </span>
      </RailButton>
      <RailButton label="Alarmlar" tall><AlarmClock /></RailButton>
      <RailButton label="Nesneler" tall><Layers size={17} strokeWidth={1.2} /></RailButton>
      <RailButton label="Sohbetler" tall>
        <Draw size={20}><path d="M3 3h18v14H9l-5 5H3zM10 20h9l4 4h2V10h-4" /></Draw>
      </RailButton>
      <div className="mt-auto w-full">
        <RailButton label="Tarayıcı">
          <Draw size={22}><circle cx="14" cy="14" r="11.500" /><path d="M18 8.500a7 7 0 1 0 2.500 3M14 14l8-8" /><circle cx="14" cy="14" r="2.500" /></Draw>
        </RailButton>
        <RailButton label="Pine">
          <Draw size={20}><path d="M8 10l6-8 6 8-3 2-2-1.500-3 2-2-1zM8 13L2 24h24l-6-9-4 4-3-3-3 1" /></Draw>
        </RailButton>
        <RailButton label="Takvim">
          <Draw size={21}><rect x="3.500" y="6" width="21" height="19" rx="2" /><path d="M3.500 12h21" /><circle cx="8.500" cy="5" r="2" fill="#0f0f0f" /><circle cx="19.500" cy="5" r="2" fill="#0f0f0f" /></Draw>
        </RailButton>
        <RailButton label="Haberler">
          <Draw size={20}><circle cx="6" cy="22" r="2" /><path d="M4 15q9 0 9 9M4 9.500q14.500 0 14.500 14.500M4 4q20 0 20 20" /></Draw>
        </RailButton>
        <RailButton label="Bildirimler"><Bell size={19} strokeWidth={1.1} /></RailButton>
        <RailButton label="Ürünler">
          <svg width="23" height="23" viewBox="0 0 23 23">
            <circle cx="11.500" cy="11.500" r="11.500" fill="#f4f4f4" />
            {[6, 10, 14].map((y) => [6, 10, 14].map((x) => <rect key={`${x}${y}`} x={x} y={y} width="3" height="3" rx="1" fill="#0f0f0f" />))}
          </svg>
        </RailButton>
        <i className="mx-auto my-1 block h-px w-[22px] bg-[#3a3a3a]" />
        <RailButton label="Yardım"><CircleHelp size={21} strokeWidth={1.1} /></RailButton>
      </div>
    </nav>
  );
}

function TradingWindow() {
  return (
    <div className="absolute bottom-[11px] left-[22px] right-[243px] top-[42px] flex flex-col overflow-hidden rounded-lg border border-t-0 border-[#333] bg-[#2b2b2b] font-['Noto_Sans',sans-serif]">
      <WindowTabs />
      <Toolbar />
      <div className="mt-0.5 flex min-h-0 flex-1">
        <DrawingTools />
        <main className="ml-[3px] flex min-w-0 flex-1 flex-col">
          <Chart />
          <BottomBars />
        </main>
        <div className="ml-0.5 flex">
          <Watchlist />
          <Rail />
        </div>
      </div>
    </div>
  );
}

/* ---------------- Taskbar ---------------- */

const TaskIcon = ({ label, on, dot, children }: { label: string; on?: boolean; dot?: boolean; children: ReactNode }) => (
  <button aria-label={label} className={`relative flex h-7 w-[27px] items-center justify-center rounded ${on ? "bg-[#333]" : ""}`}>
    {children}
    {dot && <i className="absolute bottom-0 h-0.5 w-1 rounded bg-[#999]" />}
    {on && <i className="absolute bottom-0 h-0.5 w-2.5 rounded bg-[#5bb4e0]" />}
  </button>
);

function Taskbar() {
  return (
    <footer className="flex h-8 shrink-0 items-center justify-between border-t border-[#3a3a3a] bg-[#202020] pl-2 pr-3 font-['Noto_Sans',sans-serif] text-white">
      <div className="flex w-[291px] justify-between">
        <TaskIcon label="Başlat">
          <svg width="16" height="16" viewBox="0 0 16 16" fill="#4cc2f5"><path d="M0 0h7.500v7.500H0zM8.500 0H16v7.500H8.500zM0 8.500h7.500V16H0zM8.500 8.500H16V16H8.500z" /></svg>
        </TaskIcon>
        <TaskIcon label="Chrome" dot>
          <svg width="16" height="16" viewBox="0 0 16 16">
            <circle cx="8" cy="8" r="8" fill="#fbc116" />
            <path d="M1.100 4A8 8 0 0 1 14.900 4H8a4 4 0 0 0-3.500 6z" fill="#e33b2e" />
            <path d="M1.100 4a8 8 0 0 0 6 12l4-6a4 4 0 0 1-6.600 0z" fill="#2da94f" />
            <circle cx="8" cy="8" r="3.800" fill="#fff" />
            <circle cx="8" cy="8" r="3" fill="#3b78e7" />
          </svg>
        </TaskIcon>
        <TaskIcon label="Opera GX">
          <svg width="17" height="17" viewBox="0 0 17 17" fill="none" stroke="#b3123f" strokeWidth="1.300">
            <circle cx="8.500" cy="8.500" r="7.600" />
            <ellipse cx="8.500" cy="8.500" rx="3.500" ry="6.200" />
            <path d="M10 1.500q5 3 5 7t-5 7" />
          </svg>
        </TaskIcon>
        <TaskIcon label="Brave"><SiBrave size={15} className="text-[#f2502a]" /></TaskIcon>
        <TaskIcon label="Dosyalar">
          <svg width="17" height="15" viewBox="0 0 17 15"><path d="M0 1h6l2 2h9v12H0z" fill="#e8a81e" /><path d="M0 5h17v10H0z" fill="#fcd45a" /><path d="M4 10h9v5H4z" fill="#1f7fc4" /></svg>
        </TaskIcon>
        <TaskIcon label="OBS" dot>
          <SiObsstudio size={15} className="text-[#c9c9c9]" />
          <i className="absolute right-1 top-[3px] h-2 w-2 rounded-full bg-[#e00f0f]" />
        </TaskIcon>
        <TaskIcon label="VS Code" dot><VscVscode size={16} className="text-[#2a9fe8]" /></TaskIcon>
        <TaskIcon label="TradingView" on>
          <span className="flex h-4 w-4 items-center justify-center rounded bg-black"><TvLogo width={13} /></span>
        </TaskIcon>
        <TaskIcon label="Steam">
          <span className="rounded-full bg-[#173a6b]"><FaSteam size={15} className="text-[#c3d8ee]" /></span>
        </TaskIcon>
        <TaskIcon label="Telegram">
          <span className="rounded-full bg-white"><FaTelegram size={15} className="text-[#2a9fd8]" /></span>
        </TaskIcon>
      </div>
      <div className="flex items-center text-[8px]">
        <ChevronUp size={10} />
        <Mic size={12} className="ml-[11px] text-[#7cc4c0]" />
        <span className="ml-3">TUR</span>
        <svg width="12" height="12" viewBox="0 0 12 12" fill="none" stroke="white" className="ml-3"><path d="M7 1H1v7h9V6M3 11h5M8 1h3v3H8zM9.500 4v3" /></svg>
        <Volume2 size={12} className="ml-1" strokeWidth={1.5} />
        <span className="ml-2 text-right leading-[11px]">02:39<br />20.03.2026</span>
        <Bell size={11} fill="white" className="ml-[5px]" />
      </div>
    </footer>
  );
}

/* ---------------- Page ---------------- */

export default function App() {
  return (
    <div className="flex h-screen flex-col overflow-hidden bg-black">
      <div className="relative flex min-h-0 flex-1 flex-col">
        <BrowserChrome />
        <div className="flex min-h-0 flex-1 bg-[#0b0b0b]">
          <KickSidebar />
          <div className="flex min-w-0 flex-1 flex-col">
            <div className="flex h-10 shrink-0 items-center justify-end gap-1.5 pr-[27px] font-['Inter',sans-serif]">
              <button className="flex h-[21px] items-center gap-1 rounded-sm bg-[#3a3c3e] px-[5px] text-[9px] font-bold text-white">
                <span className="flex h-3 w-3 items-center justify-center overflow-hidden rounded-full border border-[#53fc18] bg-[#53fc18]"><KickMark size={9} /></span>
                KICKs Satın Al
              </button>
              <svg width="21" height="21" viewBox="0 0 21 21">
                <circle cx="10.500" cy="10.500" r="10.500" fill="#ededed" />
                <path d="M3 4l3.500 2.500L8 3l1 3h3l1-3 1.500 3.500L18 4l-1.500 5 2 3-3-.5-1 4-1.500-2-1 5h-3l-1-5-1.500 2-1-4-3 .5 2-3z" fill="#222" />
                <path d="M7 9l2 1M14 9l-2 1M9.500 12h2v3h-2z" stroke="#ccc" fill="#777" />
              </svg>
            </div>
            <div className="flex min-h-0 flex-1">
              <div className="mb-[88px] min-w-0 flex-1 bg-black" />
              <Chat />
            </div>
          </div>
        </div>
        <TradingWindow />
      </div>
      <Taskbar />
    </div>
  );
}
